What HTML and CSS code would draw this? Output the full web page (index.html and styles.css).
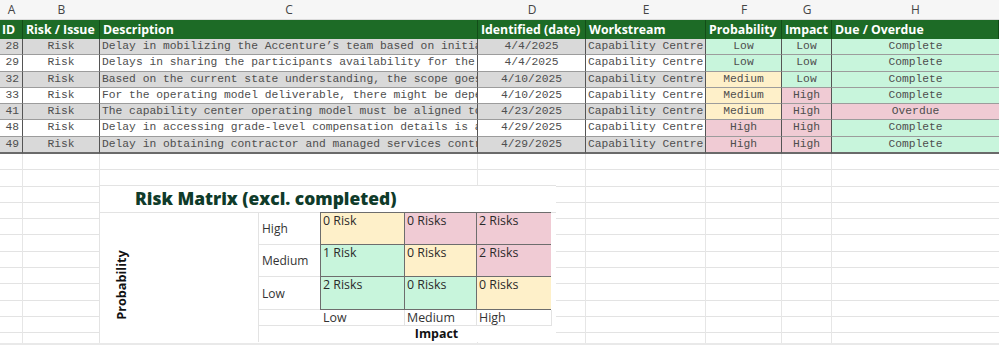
FILE: index.html
```html
<!DOCTYPE html>
<html lang="en">
<head>
<meta charset="utf-8">
<title>Risk register</title>
<link rel="stylesheet" href="styles.css">
</head>
<body>
<div class="sheet">
  <div class="grid cols">
    <div>A</div><div>B</div><div>C</div><div>D</div><div>E</div><div>F</div><div>G</div><div>H</div>
  </div>

  <div class="grid hdr">
    <div>ID</div><div>Risk / Issue</div><div>Description</div><div>Identified (date)</div><div>Workstream</div><div>Probability</div><div>Impact</div><div>Due / Overdue</div>
  </div>

  <div class="grid row shade">
    <div class="num">28</div><div class="mid">Risk</div><div class="desc">Delay in mobilizing the Accenture’s team based on initia</div><div class="mid">4/4/2025</div><div class="ws">Capability Centre</div><div class="mid low">Low</div><div class="mid low">Low</div><div class="mid low">Complete</div>
  </div>
  <div class="grid row">
    <div class="num">29</div><div class="mid">Risk</div><div class="desc">Delays in sharing the participants availability for the</div><div class="mid">4/4/2025</div><div class="ws">Capability Centre</div><div class="mid low">Low</div><div class="mid low">Low</div><div class="mid low">Complete</div>
  </div>
  <div class="grid row shade">
    <div class="num">32</div><div class="mid">Risk</div><div class="desc">Based on the current state understanding, the scope goes</div><div class="mid">4/10/2025</div><div class="ws">Capability Centre</div><div class="mid med">Medium</div><div class="mid low">Low</div><div class="mid low">Complete</div>
  </div>
  <div class="grid row">
    <div class="num">33</div><div class="mid">Risk</div><div class="desc">For the operating model deliverable, there might be depe</div><div class="mid">4/10/2025</div><div class="ws">Capability Centre</div><div class="mid med">Medium</div><div class="mid high">High</div><div class="mid low">Complete</div>
  </div>
  <div class="grid row shade">
    <div class="num">41</div><div class="mid">Risk</div><div class="desc">The capability center operating model must be aligned to</div><div class="mid">4/23/2025</div><div class="ws">Capability Centre</div><div class="mid med">Medium</div><div class="mid high">High</div><div class="mid high">Overdue</div>
  </div>
  <div class="grid row">
    <div class="num">48</div><div class="mid">Risk</div><div class="desc">Delay in accessing grade-level compensation details is a</div><div class="mid">4/29/2025</div><div class="ws">Capability Centre</div><div class="mid high">High</div><div class="mid high">High</div><div class="mid low">Complete</div>
  </div>
  <div class="grid row shade last">
    <div class="num">49</div><div class="mid">Risk</div><div class="desc">Delay in obtaining contractor and managed services contr</div><div class="mid">4/29/2025</div><div class="ws">Capability Centre</div><div class="mid high">High</div><div class="mid high">High</div><div class="mid low">Complete</div>
  </div>

  <div class="grid empty">
    <div></div><div></div><div></div><div></div><div></div><div></div><div></div><div></div>
  </div>
  <div class="scroll"></div>

  <div class="chart">
    <div class="title">Risk Matrix (excl. completed)</div>
    <div class="prob"><span>Probability</span></div>
    <div class="plab r2">High</div>
    <div class="plab r3">Medium</div>
    <div class="plab r4">Low</div>
    <div class="plab r5"></div>
    <div class="plab r6"></div>
    <div class="matrix">
      <div class="m med">0 Risk</div><div class="m high">0 Risks</div><div class="m high">2 Risks</div>
      <div class="m low">1 Risk</div><div class="m med">0 Risks</div><div class="m high">2 Risks</div>
      <div class="m low">2 Risks</div><div class="m low">0 Risks</div><div class="m med">0 Risks</div>
    </div>
    <div class="ilab c3">Low</div>
    <div class="ilab c4">Medium</div>
    <div class="ilab c5">High</div>
    <div class="impact">Impact</div>
  </div>
</div>
</body>
</html>
```

FILE: styles.css
```css
* { box-sizing: border-box; }

html, body {
  margin: 0;
  padding: 0;
  background: #ffffff;
  width: 999px;
  height: 345px;
  overflow: hidden;
}

.sheet {
  position: relative;
  width: 999px;
  height: 345px;
  font-family: "Open Sans", "Liberation Sans", sans-serif;
}

.grid {
  display: grid;
  grid-template-columns: 23px 77px 378px 108px 120px 76px 50px 1fr;
}

/* column letters */
.cols {
  height: 20px;
  background: #f6f6f6;
  border-bottom: 1px solid #dcdcdc;
}
.cols > div {
  font-size: 12px;
  color: #444;
  text-align: center;
  line-height: 20px;
}

/* green header */
.hdr {
  height: 19px;
  background: #1d6b26;
}
.hdr > div {
  color: #fff;
  font-weight: 700;
  font-size: 12.3px;
  line-height: 19px;
  padding-left: 3px;
  white-space: nowrap;
  overflow: hidden;
  border-right: 1px solid #124d18;
}
.hdr > div:first-child { padding-left: 2px; }

/* data rows */
.row {
  height: 16.3px;
  background: #ffffff;
}
.row.shade { background: #d9d9d9; }
.row > div {
  font-family: "Liberation Mono", "Courier New", monospace;
  font-size: 11.3px;
  color: #4e4e4e;
  line-height: 15px;
  border-right: 1px solid #555;
  border-bottom: 1px solid #9c9c9c;
  white-space: nowrap;
  overflow: hidden;
}
.row.last { height: 17.3px; }
.row.last > div { border-bottom: 2px solid #6a6a6a; }
.row > div:last-child { border-right: none; }

.num { text-align: right; padding-right: 3px; }
.mid { text-align: center; }
.desc { padding-left: 2px; }
.ws { padding-left: 2px; }

.low { background: #c8f5dc; }
.med { background: #fef0c9; }
.high { background: #f0cbd4; }

/* empty sheet area */
.empty {
  height: 189px;
  background-image: repeating-linear-gradient(to bottom, transparent 0, transparent 15.3px, #e3e3e3 15.3px, #e3e3e3 16.3px);
}
.empty > div { border-right: 1px solid #e6e6e6; }
.empty > div:last-child { border-right: none; }

.scroll {
  height: 4px;
  background: #e9e9e9;
}

/* floating risk matrix picture */
.chart {
  position: absolute;
  left: 99px;
  top: 185px;
  width: 457px;
  height: 157px;
  background: #ffffff;
  border-left: 1px solid #e3e3e3;
  border-top: 1px solid #e3e3e3;
  display: grid;
  grid-template-columns: 159px 62px 84px 72px 75px 4px;
  grid-template-rows: 27px 32px 32px 33px 16px 16px;
}

.title {
  grid-column: 1 / -1;
  grid-row: 1;
  border-bottom: 1px solid #e3e3e3;
  padding-left: 35px;
  font-size: 17.4px;
  font-weight: 800;
  color: #0f3b2a;
  line-height: 25px;
  white-space: nowrap;
}

.prob {
  grid-column: 1;
  grid-row: 2 / 7;
  border-right: 1px solid #e3e3e3;
  position: relative;
}
.prob span {
  position: absolute;
  left: -19px;
  top: 65px;
  width: 80px;
  text-align: center;
  transform: rotate(-90deg);
  font-size: 12.7px;
  font-weight: 700;
  color: #111;
  line-height: 14px;
}

.plab {
  grid-column: 2;
  border-bottom: 1px solid #e3e3e3;
  font-size: 12px;
  color: #333;
  padding-left: 3px;
  display: flex;
  align-items: center;
}
.r2 { grid-row: 2; }
.r3 { grid-row: 3; }
.r4 { grid-row: 4; }
.r5 { grid-row: 5; }
.r6 { grid-row: 6; border-bottom: none; }

.matrix {
  grid-column: 3 / 6;
  grid-row: 2 / 5;
  display: grid;
  grid-template-columns: 83px 71px 74px;
  grid-template-rows: 31px 31px 32px;
  gap: 1px;
  background: #6d6d6d;
  border: 1px solid #6d6d6d;
  margin-left: -1px;
  margin-top: -1px;
  margin-right: 1px;
}
.m {
  font-size: 12.4px;
  color: #2a2a2a;
  padding-left: 2px;
  line-height: 15px;
}

.ilab {
  grid-row: 5;
  border-right: 1px solid #e3e3e3;
  border-bottom: 1px solid #e3e3e3;
  font-size: 12.4px;
  color: #333;
  padding-left: 2px;
  line-height: 15px;
}
.c3 { grid-column: 3; }
.c4 { grid-column: 4; }
.c5 { grid-column: 5; }

.impact {
  grid-column: 3 / 6;
  grid-row: 6;
  text-align: center;
  font-size: 12.4px;
  font-weight: 700;
  color: #111;
  line-height: 16px;
}
```
